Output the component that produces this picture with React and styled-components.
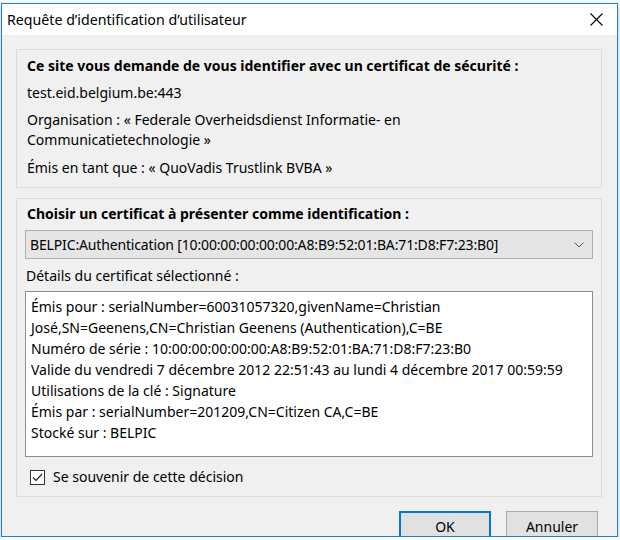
import React from 'react'
import styled, { createGlobalStyle } from 'styled-components'

const Global = createGlobalStyle`
  html, body {
    margin: 0;
    padding: 0;
    background: #ffffff;
  }
  body {
    font-family: "Noto Sans", "Open Sans", "Liberation Sans", sans-serif;
    font-size: 14px;
    color: #000;
  }
`

const Window = styled.div`
  margin: 3px 0 0 1px;
  width: 617px;
  height: 534px;
  box-sizing: border-box;
  border: 1px solid #1883d7;
  background: #f0f0f0;
  overflow: hidden;
  display: flex;
  flex-direction: column;
  box-shadow: 0 2px 6px rgba(0, 0, 0, 0.25);
`

const TitleBar = styled.div`
  height: 31px;
  flex: none;
  background: #fff;
  display: flex;
  align-items: center;
  justify-content: space-between;
  padding: 0 14px 0 5px;
`

const Title = styled.span`
  font-size: 14.2px;
  padding-bottom: 1px;
`

const CloseBtn = styled.button`
  width: 14px;
  height: 14px;
  padding: 0;
  border: none;
  background: none;
  display: flex;
  align-items: center;
  justify-content: center;
`

const Body = styled.div`
  flex: 1;
  padding: 14px 15px 0 14px;
  display: flex;
  flex-direction: column;
`

const Group = styled.div`
  border: 1px solid #dcdcdc;
  padding: ${(p) => p.$pad};
  display: flex;
  flex-direction: column;
  margin-bottom: ${(p) => p.$mb || 0}px;
`

const Line = styled.div`
  line-height: 20px;
  white-space: nowrap;
  margin-top: ${(p) => p.$mt || 0}px;
  padding-left: ${(p) => p.$pl || 0}px;
  font-weight: ${(p) => (p.$bold ? 700 : 400)};
`

const Select = styled.div`
  margin-top: 6px;
  height: 29px;
  box-sizing: border-box;
  border: 1px solid #adadad;
  background: #e5e5e5;
  display: flex;
  align-items: center;
  justify-content: space-between;
  padding: 0 8px 0 4px;
  white-space: nowrap;
  letter-spacing: -0.15px;
`

const Details = styled.div`
  margin-top: 5px;
  height: 166px;
  box-sizing: border-box;
  border: 1px solid #8f8f8f;
  background: #fff;
  padding: 4px 5px;
`

const DetailLine = styled.div`
  line-height: 21px;
  white-space: nowrap;
`

const CheckRow = styled.label`
  margin-top: 10px;
  display: flex;
  align-items: center;
  gap: 8px;
  padding-left: 5px;
  line-height: 20px;
`

const CheckBox = styled.span`
  width: 15px;
  height: 15px;
  box-sizing: border-box;
  border: 1px solid #333;
  background: #fff;
  display: flex;
  align-items: center;
  justify-content: center;
`

const Buttons = styled.div`
  margin-top: 14px;
  display: flex;
  justify-content: flex-end;
  gap: 15px;
  padding-right: 4px;
`

const Button = styled.button`
  width: 92px;
  height: 30px;
  box-sizing: border-box;
  background: #e1e1e1;
  border: ${(p) => (p.$primary ? '2px solid #0078d7' : '1px solid #adadad')};
  font-family: inherit;
  font-size: 14px;
  color: #000;
  padding: 0;
`

const details = [
  'Émis pour : serialNumber=60031057320,givenName=Christian',
  'José,SN=Geenens,CN=Christian Geenens (Authentication),C=BE',
  'Numéro de série : 10:00:00:00:00:00:A8:B9:52:01:BA:71:D8:F7:23:B0',
  'Valide du vendredi 7 décembre 2012 22:51:43 au lundi 4 décembre 2017 00:59:59',
  'Utilisations de la clé : Signature',
  'Émis par : serialNumber=201209,CN=Citizen CA,C=BE',
  'Stocké sur : BELPIC',
]

export default function App() {
  return (
    <>
      <Global />
      <Window>
        <TitleBar>
          <Title>Requête d’identification d’utilisateur</Title>
          <CloseBtn aria-label="Fermer">
            <svg width="13" height="13" viewBox="0 0 13 13">
              <path d="M0.5 0.5 L12.5 12.5 M12.5 0.5 L0.5 12.5" stroke="#000" strokeWidth="1.1" />
            </svg>
          </CloseBtn>
        </TitleBar>
        <Body>
          <Group $pad="6px 10px 9px 10px" $mb={10}>
            <Line $bold>Ce site vous demande de vous identifier avec un certificat de sécurité :</Line>
            <Line $mt={7}>test.eid.belgium.be:443</Line>
            <Line $mt={7}>Organisation : « Federale Overheidsdienst Informatie- en</Line>
            <Line>Communicatietechnologie »</Line>
            <Line $mt={8}>Émis en tant que : « QuoVadis Trustlink BVBA »</Line>
          </Group>
          <Group $pad="5px 8px 9px 8px">
            <Line $bold $pl={2}>Choisir un certificat à présenter comme identification :</Line>
            <Select>
              <span>BELPIC:Authentication [10:00:00:00:00:00:A8:B9:52:01:BA:71:D8:F7:23:B0]</span>
              <svg width="10" height="6" viewBox="0 0 10 6">
                <path d="M0.5 0.5 L5 5 L9.5 0.5" fill="none" stroke="#555" strokeWidth="1" />
              </svg>
            </Select>
            <Line $mt={7} $pl={1}>Détails du certificat sélectionné :</Line>
            <Details>
              {details.map((d) => (
                <DetailLine key={d}>{d}</DetailLine>
              ))}
            </Details>
            <CheckRow>
              <CheckBox>
                <svg width="11" height="9" viewBox="0 0 11 9">
                  <path d="M1 4.5 L4 7.5 L10 1" fill="none" stroke="#222" strokeWidth="1.2" />
                </svg>
              </CheckBox>
              <span>Se souvenir de cette décision</span>
            </CheckRow>
          </Group>
          <Buttons>
            <Button $primary>OK</Button>
            <Button>Annuler</Button>
          </Buttons>
        </Body>
      </Window>
    </>
  )
}
